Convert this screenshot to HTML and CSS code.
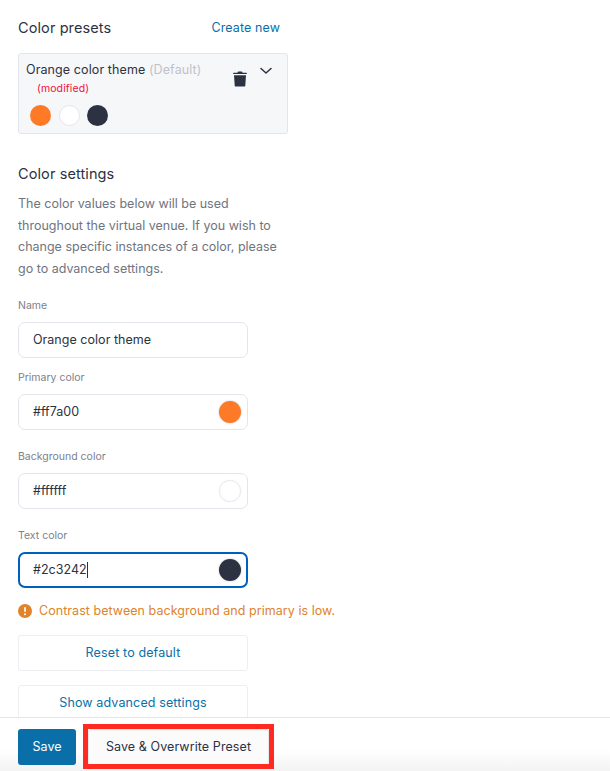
FILE: index.html
```html
<!DOCTYPE html>
<html lang="en">
<head>
<meta charset="utf-8">
<title>Color settings</title>
<link rel="stylesheet" href="styles.css">
</head>
<body>
<div class="page">
  <main class="content">
    <div class="preset-head">
      <h2 class="title">Color presets</h2>
      <a class="link">Create new</a>
    </div>
    <section class="preset-card">
      <div class="preset-top">
        <div class="preset-name">
          <div>Orange color theme <span class="muted">(Default)</span></div>
          <div class="modified">(modified)</div>
        </div>
        <svg class="trash" viewBox="0 0 14 16" width="14" height="16"><path fill="#2c3242" d="M5 .6h4l.6 1.2h3.6c.4 0 .7.3.7.7v.5H.1v-.5c0-.4.3-.7.7-.7h3.6L5 .6zM1 4.2h12l-.7 10.2c0 .6-.5 1-1 1H2.700c-.5 0-1-.4-1-1L1 4.200z"/></svg>
        <svg class="chev" viewBox="0 0 12 8" width="12" height="8"><path fill="none" stroke="#2c3242" stroke-width="1.500" stroke-linecap="round" stroke-linejoin="round" d="M1 1.500l5 4.500 5-4.500"/></svg>
      </div>
      <div class="dots">
        <span class="dot dot-orange"></span>
        <span class="dot dot-white"></span>
        <span class="dot dot-dark"></span>
      </div>
    </section>

    <h2 class="title settings-title">Color settings</h2>
    <p class="desc">The color values below will be used throughout the virtual venue. If you wish to change specific instances of a color, please go to advanced settings.</p>

    <label class="label label-name">Name</label>
    <div class="input"><span>Orange color theme</span></div>

    <label class="label label-primary">Primary color</label>
    <div class="input"><span>#ff7a00</span><span class="swatch dot-orange"></span></div>

    <label class="label label-bg">Background color</label>
    <div class="input"><span>#ffffff</span><span class="swatch dot-white"></span></div>

    <label class="label label-bg">Text color</label>
    <div class="input input-focus"><span class="typed">#2c3242</span><span class="swatch dot-dark"></span></div>

    <div class="warning">
      <svg viewBox="0 0 14 14" width="14" height="14"><circle cx="7" cy="7" r="7" fill="#e0832b"/><rect x="6.200" y="3" width="1.600" height="5" rx=".8" fill="#fff"/><circle cx="7" cy="10.200" r="1" fill="#fff"/></svg>
      <span>Contrast between background and primary is low.</span>
    </div>

    <button class="ghost">Reset to default</button>
    <button class="ghost ghost-adv">Show advanced settings</button>
  </main>
  <footer class="footer">
    <button class="btn-save">Save</button>
    <div class="overwrite-wrap">
      <button class="btn-overwrite">Save &amp; Overwrite Preset</button>
      <div class="highlight"></div>
    </div>
  </footer>
</div>
</body>
</html>
```

FILE: styles.css
```css
* { box-sizing: border-box; }
html, body { margin: 0; height: 100%; background: #fff; }
body { font-family: Inter, "Liberation Sans", sans-serif; color: #2c3242; overflow: hidden; }
.page { width: 610px; height: 771px; display: flex; flex-direction: column; }
.content { flex: 1; min-height: 0; overflow: hidden; padding: 18px 18px 0; }
.preset-head { width: 270px; display: flex; justify-content: space-between; align-items: center; padding-right: 8px; height: 20px; }
.title { margin: 0; font-size: 14.500px; font-weight: 400; line-height: 20px; letter-spacing: .1px; }
.link { font-size: 12.500px; font-weight: 400; letter-spacing: .1px; color: #0a6fa8; padding-bottom: 1px; }
.preset-card { width: 270px; height: 81px; margin-top: 15px; background: #f6f7f9; border: 1px solid #e3e5ea; border-radius: 3px; padding: 7px 7px 0; }
.preset-top { display: flex; align-items: flex-start; height: 39px; position: relative; }
.preset-name { font-size: 12.500px; font-weight: 400; letter-spacing: .1px; line-height: 18px; flex: 1; }
.muted { color: #c0c2c9; font-weight: 400; }
.modified { font-size: 10.500px; letter-spacing: .1px; color: #f0103c; padding-left: 11px; line-height: 18px; margin-top: 1px; }
.trash { margin-top: 10px; margin-right: 13px; }
.chev { margin-top: 6px; margin-right: 8px; }
.dots { display: flex; gap: 7.500px; margin-top: 5px; padding-left: 4px; }
.dot { width: 21px; height: 21px; border-radius: 50%; display: block; }
.dot-orange { background: #ff7a26; }
.dot-white { background: #fff; border: 1px solid #e3e5ea; }
.dot-dark { background: #2c3242; }
.settings-title { margin-top: 30px; }
.desc { width: 262px; margin: 9px 0 0; font-size: 12.500px; line-height: 21.500px; color: #6f7480; }
.label { display: block; font-size: 10.500px; line-height: 14px; color: #7d818c; }
.label-name { margin-top: 20px; }
.label-primary { margin-top: 13px; }
.label-bg { margin-top: 20px; }
.input { width: 230px; height: 36px; margin-top: 9px; border: 1px solid #e3e5ea; border-radius: 7px; padding: 0 6px 1px 14px; display: flex; align-items: center; justify-content: space-between; font-size: 12.500px; letter-spacing: .03px; color: #2c3242; background: #fff; }
.input-focus { border: 2px solid #0060bf; padding: 0 5px 1px 13px; }
.typed { border-right: 1px solid #2c3242; line-height: 16px; }
.swatch { width: 22px; height: 22px; border-radius: 50%; box-shadow: 0 0 2px rgba(44,50,66,.3); display: block; margin-bottom: -1px; }
.swatch.dot-white { border-color: #eceef1; box-shadow: 0 0 1px rgba(44,50,66,.12); }
.warning { display: flex; align-items: center; gap: 7px; margin-top: 16px; font-size: 12.500px; letter-spacing: .05px; line-height: 14px; color: #e0832b; }
.ghost { display: block; width: 230px; height: 36px; margin-top: 17px; background: #fff; border: 1px solid #eceef1; border-radius: 3px; font: 400 12.500px Inter, "Liberation Sans", sans-serif; letter-spacing: .13px; color: #0a6fa8; padding: 0 0 1px; }
.ghost-adv { margin-top: 14px; }
.footer { height: 54px; flex: none; border-top: 1px solid #e3e5ea; background: linear-gradient(#fff 60%, #f3f3f3); display: flex; align-items: flex-start; padding: 11px 0 0 18px; gap: 12px; }
.btn-save { width: 58px; height: 36px; background: #0a6fa8; color: #fff; border: 0; border-radius: 3px; font: 400 12.500px Inter, "Liberation Sans", sans-serif; padding: 0 0 1px; }
.overwrite-wrap { position: relative; }
.btn-overwrite { width: 181px; height: 36px; background: #fbfbfb; color: #2c3242; border: 1px solid #e6e7ea; border-radius: 3px; font: 400 12.500px Inter, "Liberation Sans", sans-serif; letter-spacing: .09px; padding: 0 0 1px; display: block; }
.highlight { position: absolute; left: -5px; top: -5px; width: 191px; height: 45px; border: 5px solid #ff2a20; }
```
